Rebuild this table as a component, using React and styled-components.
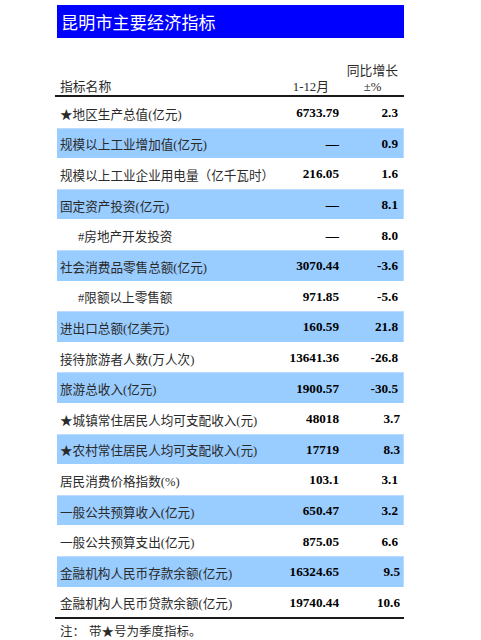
import styled, { createGlobalStyle } from "styled-components";

const GlobalStyle = createGlobalStyle`
  html, body {
    margin: 0;
    padding: 0;
    background: #ffffff;
  }
  body {
    font-family: "Liberation Serif", "Noto Sans CJK SC", serif;
  }
`;

const rows = [
  { label: "★地区生产总值(亿元)", value: "6733.79", pct: "2.3" },
  { label: "规模以上工业增加值(亿元)", value: "—", pct: "0.9" },
  { label: "规模以上工业企业用电量（亿千瓦时）", value: "216.05", pct: "1.6" },
  { label: "固定资产投资(亿元)", value: "—", pct: "8.1" },
  { label: "#房地产开发投资", value: "—", pct: "8.0", sub: true },
  { label: "社会消费品零售总额(亿元)", value: "3070.44", pct: "-3.6" },
  { label: "#限额以上零售额", value: "971.85", pct: "-5.6", sub: true },
  { label: "进出口总额(亿美元)", value: "160.59", pct: "21.8" },
  { label: "接待旅游者人数(万人次)", value: "13641.36", pct: "-26.8" },
  { label: "旅游总收入(亿元)", value: "1900.57", pct: "-30.5" },
  { label: "★城镇常住居民人均可支配收入(元)", value: "48018", pct: "3.7", shift: true },
  { label: "★农村常住居民人均可支配收入(元)", value: "17719", pct: "8.3", shift: true },
  { label: "居民消费价格指数(%)", value: "103.1", pct: "3.1" },
  { label: "一般公共预算收入(亿元)", value: "650.47", pct: "3.2" },
  { label: "一般公共预算支出(亿元)", value: "875.05", pct: "6.6" },
  { label: "金融机构人民币存款余额(亿元)", value: "16324.65", pct: "9.5", shift: true },
  { label: "金融机构人民币贷款余额(亿元)", value: "19740.44", pct: "10.6", shift: true },
];

const Page = styled.div`
  width: 349px;
  margin-left: 55px;
  padding-top: 5px;
`;

const TitleBar = styled.div`
  margin-left: 2px;
  height: 33px;
  background: #0000ff;
  color: #ffffff;
  font-family: "Noto Sans CJK SC", sans-serif;
  font-size: 17px;
  line-height: 33px;
  padding-left: 4px;
  letter-spacing: 0.2px;
`;

const Header = styled.div`
  margin-top: 25px;
  display: grid;
  grid-template-columns: minmax(0, 1fr) 80px 59px;
  grid-template-rows: 16px 16px;
  padding: 0 6px 0 5px;
  border-bottom: 2px solid #1a1a1a;
  color: #2a2a2a;
  font-size: 12.8px;
  line-height: 16px;
`;

const HeadCell = styled.div`
  grid-row: ${(p) => p.$row};
  grid-column: ${(p) => p.$col};
  text-align: ${(p) => p.$align || "left"};
  padding-right: ${(p) => p.$pr || 0}px;
  padding-left: ${(p) => p.$pl || 0}px;
  white-space: nowrap;
`;

const Row = styled.div`
  margin-left: 2px;
  height: 30.6px;
  display: grid;
  grid-template-columns: minmax(0, 1fr) 80px 59px;
  align-items: center;
  padding: 2px 6px 0 3px;
  box-sizing: border-box;
  background: ${(p) => (p.$blue ? "#99ccff" : "#ffffff")};
  box-shadow: ${(p) => (p.$blue ? "inset 0 1px 0 #bcdcff, inset -1px 0 0 #bcdcff" : "none")};
`;

const Label = styled.div`
  color: #2a2a2a;
  font-size: 12.6px;
  white-space: nowrap;
  padding-left: ${(p) => (p.$sub ? 18 : 0)}px;
`;

const Num = styled.div`
  color: #000000;
  font-weight: bold;
  font-size: 13.2px;
  text-align: right;
  white-space: nowrap;
`;

const Pct = styled(Num)`
  margin-right: ${(p) => (p.$shift ? -2 : 0)}px;
`;

const BottomRule = styled.div`
  border-top: 2px solid #1a1a1a;
`;

const Note = styled.div`
  display: flex;
  padding: 5px 0 0 5px;
  color: #2a2a2a;
  font-size: 12.5px;
  line-height: 16px;
`;

const NoteKey = styled.span`
  width: 29px;
`;

export default function App() {
  return (
    <>
      <GlobalStyle />
      <Page>
        <TitleBar>昆明市主要经济指标</TitleBar>
        <Header>
          <HeadCell $row={1} $col={3} $align="right">同比增长</HeadCell>
          <HeadCell $row={2} $col={1}>指标名称</HeadCell>
          <HeadCell $row={2} $col={2} $align="right" $pr={10}>1-12月</HeadCell>
          <HeadCell $row={2} $col={3} $align="center" $pl={8}>±%</HeadCell>
        </Header>
        {rows.map((r, i) => (
          <Row key={r.label} $blue={i % 2 === 1}>
            <Label $sub={r.sub}>{r.label}</Label>
            <Num>{r.value}</Num>
            <Pct $shift={r.shift}>{r.pct}</Pct>
          </Row>
        ))}
        <BottomRule />
        <Note>
          <NoteKey>注：</NoteKey>
          <span>带★号为季度指标。</span>
        </Note>
      </Page>
    </>
  );
}
